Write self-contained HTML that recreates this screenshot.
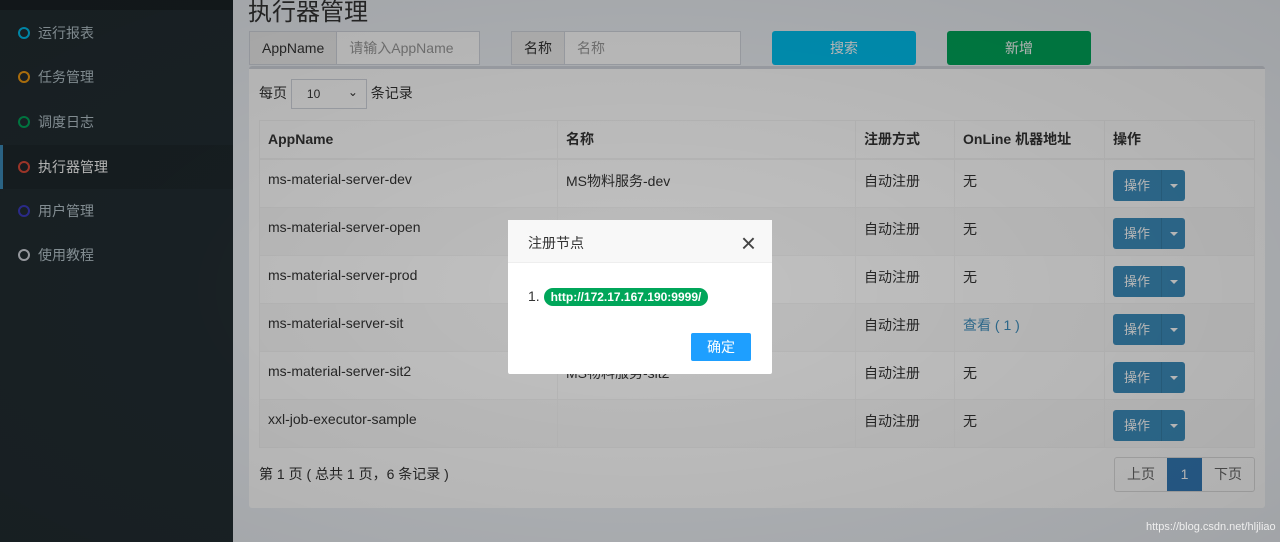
<!DOCTYPE html>
<html><head><meta charset="utf-8"><style>
*{box-sizing:border-box;margin:0;padding:0}
body{width:1280px;height:542px;overflow:hidden;background:#ecf0f5;font-family:"Liberation Sans","Noto Sans CJK SC",sans-serif;font-size:14px;color:#333;position:relative}
.sb{position:absolute;left:0;top:0;width:233px;height:542px;background:#222d32}
.sb .top{height:10px;background:#1a2226}
.it{position:absolute;left:0;width:233px;height:44px;color:#b8c7ce;font-size:14px;line-height:44px;padding-left:38px}
.it i{position:absolute;left:18px;top:16px;width:12px;height:12px;border:2px solid;border-radius:50%}
.it.a{background:#1e282c;color:#fff;border-left:3px solid #3c8dbc;padding-left:35px}
.it.a i{left:15px}
h1{position:absolute;left:248px;top:-8px;font-size:24px;font-weight:normal;color:#333}
.ig{position:absolute;top:31px;height:34px;border:1px solid #d2d6de;display:flex;background:#fff}
.ig .l{background:#eee;border-right:1px solid #d2d6de;padding:0 12px;line-height:32px}
.ig .p{color:#999;padding:0 12px;line-height:32px}
.btn{position:absolute;top:31px;height:34px;width:144px;border-radius:3px;color:#fff;text-align:center;line-height:34px}
.box{position:absolute;left:249px;top:66px;width:1016px;height:442px;background:#fff;border-top:3px solid #d2d6de;border-radius:3px}
table{position:absolute;left:10px;top:51px;border-collapse:collapse;width:996px}
td,th{border:1px solid #f4f4f4;text-align:left;padding:0 8px;vertical-align:top}
th{height:37px;line-height:37px;font-weight:bold;border-bottom:2px solid #f4f4f4}
td{height:48px;padding-top:11px}
tr:nth-child(odd) td{background:#f9f9f9}
.op{display:inline-flex;margin-top:-1px;height:31px;border-radius:3px;background:#3c8dbc;color:#fff;font-size:13px}
.op span{padding:0 11px;line-height:31px}
.op b{width:24px;border-left:1px solid #367fa9;position:relative}
.op b:after{content:"";position:absolute;left:8px;top:14px;border:4px solid transparent;border-top-color:#fff;border-bottom:0}
.ov{position:absolute;left:0;top:0;width:1280px;height:542px;background:radial-gradient(ellipse at 640px 290px,rgba(0,0,0,.24),rgba(0,0,0,.32))}
.md{position:absolute;left:508px;top:220px;width:264px;height:154px;background:#fff;border-radius:2px}
.mh{height:43px;background:#f8f8f8;border-bottom:1px solid #eee;padding:13px 20px;font-size:14px}
.mh .x{position:absolute;right:16px;top:8px;font-size:26px;color:#444;font-weight:normal}
.pag{position:absolute;left:865px;top:388px;display:flex;border:1px solid #ddd;border-radius:3px;height:35px}
.pag div{width:52px;text-align:center;line-height:33px;color:#666}
</style></head><body>
<div class="sb"><div class="top"></div>
<div class="it" style="top:11px"><i style="color:#00c0ef"></i>运行报表</div>
<div class="it" style="top:55px"><i style="color:#f39c12"></i>任务管理</div>
<div class="it" style="top:100px"><i style="color:#00a65a"></i>调度日志</div>
<div class="it a" style="top:145px"><i style="color:#dd4b39"></i>执行器管理</div>
<div class="it" style="top:189px"><i style="color:#3c3cc0"></i>用户管理</div>
<div class="it" style="top:233px"><i style="color:#d2d6de"></i>使用教程</div>
</div>
<h1>执行器管理</h1>
<div class="ig" style="left:249px;width:231px"><div class="l">AppName</div><div class="p">请输入AppName</div></div>
<div class="ig" style="left:511px;width:230px"><div class="l">名称</div><div class="p">名称</div></div>
<div class="btn" style="left:772px;background:#00c0ef">搜索</div>
<div class="btn" style="left:947px;background:#00a65a">新增</div>
<div class="box">
<div style="position:absolute;left:10px;top:10px;line-height:28px">每页 <span style="display:inline-block;width:76px;height:30px;border:1px solid #d2d6de;vertical-align:middle;font-size:12px;padding-left:15px;position:relative">10<span style="position:absolute;right:8px;top:-2px;font-size:12px">⌄</span></span> 条记录</div>
<table>
<tr><th style="width:298px">AppName</th><th style="width:298px">名称</th><th style="width:99px">注册方式</th><th style="width:150px">OnLine 机器地址</th><th>操作</th></tr>
<tr><td>ms-material-server-dev</td><td>MS物料服务-dev</td><td>自动注册</td><td>无</td><td><div class="op"><span>操作</span><b></b></div></td></tr>
<tr><td>ms-material-server-open</td><td>MS物料服务-open</td><td>自动注册</td><td>无</td><td><div class="op"><span>操作</span><b></b></div></td></tr>
<tr><td>ms-material-server-prod</td><td>MS物料服务-prod</td><td>自动注册</td><td>无</td><td><div class="op"><span>操作</span><b></b></div></td></tr>
<tr><td>ms-material-server-sit</td><td>MS物料服务-sit</td><td>自动注册</td><td style="color:#3c8dbc">查看 ( 1 )</td><td><div class="op"><span>操作</span><b></b></div></td></tr>
<tr><td>ms-material-server-sit2</td><td>MS物料服务-sit2</td><td>自动注册</td><td>无</td><td><div class="op"><span>操作</span><b></b></div></td></tr>
<tr><td>xxl-job-executor-sample</td><td></td><td>自动注册</td><td>无</td><td><div class="op"><span>操作</span><b></b></div></td></tr>
</table>
<div style="position:absolute;left:10px;top:395px">第 1 页 ( 总共 1 页，6 条记录 )</div>
<div class="pag"><div>上页</div><div style="background:#337ab7;color:#fff;width:35px">1</div><div>下页</div></div>
</div>
<div class="ov"></div>
<div style="position:absolute;left:1146px;top:521px;color:#eee;font-size:11px">https://blog.csdn.net/hljliao</div>
<div class="md">
<div class="mh">注册节点<span class="x">×</span></div>
<div style="position:absolute;left:20px;top:68px;font-size:14px">1. <span style="background:#00a65a;color:#fff;font-weight:bold;font-size:12px;padding:2px 7px;border-radius:9px">http://172.17.167.190:9999/</span></div>
<div style="position:absolute;left:183px;top:113px;width:60px;height:28px;background:#1e9fff;color:#fff;text-align:center;line-height:28px;border-radius:2px">确定</div>
</div>
</body></html>
